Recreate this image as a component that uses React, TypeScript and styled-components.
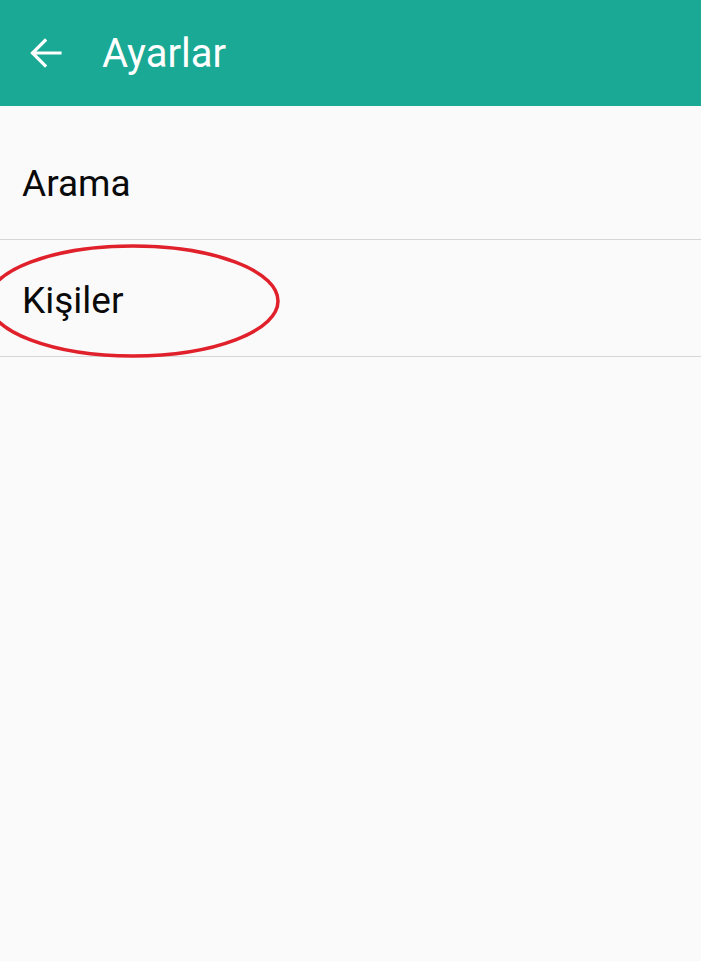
import React from "react";
import styled, { createGlobalStyle } from "styled-components";

const Global = createGlobalStyle`
  html, body { margin: 0; padding: 0; background: #fafafa; }
  body { font-family: Roboto, "Noto Sans", sans-serif; }
`;

const Screen = styled.div`
  width: 701px;
  height: 961px;
  background: #fafafa;
  display: flex;
  flex-direction: column;
  overflow: hidden;
`;

const Toolbar = styled.header`
  height: 106px;
  background: #19a994;
  display: flex;
  align-items: center;
  padding-left: 28px;
  gap: 38px;
  flex-shrink: 0;
`;

const BackButton = styled.div`
  width: 36px;
  height: 36px;
  display: flex;
  align-items: center;
  justify-content: center;
`;

const Title = styled.h1`
  margin: 0;
  font-size: 40px;
  font-weight: 400;
  color: #ffffff;
  line-height: 1;
  padding-top: 2px;
`;

const List = styled.div`
  display: flex;
  flex-direction: column;
  padding-top: 17px;
`;

const Row = styled.div`
  position: relative;
  height: 116px;
  border-bottom: 1px solid #d6d6d6;
  display: flex;
  align-items: center;
  padding-left: 22px;
`;

const Label = styled.span`
  font-size: 37px;
  color: #0a0a0a;
  line-height: 1;
  padding-top: 4px;
`;

const Highlight = styled.svg`
  position: absolute;
  left: -20px;
  top: -3px;
  width: 310px;
  height: 124px;
  pointer-events: none;
`;

export default function App() {
  return (
    <Screen>
      <Global />
      <Toolbar>
        <BackButton>
          <svg width="36" height="36" viewBox="0 0 36 36">
            <path
              d="M32 18 H5 M17 5.5 L4.5 18 L17 30.5"
              stroke="#ffffff"
              strokeWidth="3.2"
              fill="none"
              strokeLinecap="square"
            />
          </svg>
        </BackButton>
        <Title>Ayarlar</Title>
      </Toolbar>
      <List>
        <Row>
          <Label>Arama</Label>
        </Row>
        <Row>
          <Label>Kişiler</Label>
          <Highlight viewBox="0 0 310 124">
            <ellipse cx="153" cy="64" rx="145" ry="55" fill="none" stroke="#e0202a" strokeWidth="3.5" />
          </Highlight>
        </Row>
      </List>
    </Screen>
  );
}
